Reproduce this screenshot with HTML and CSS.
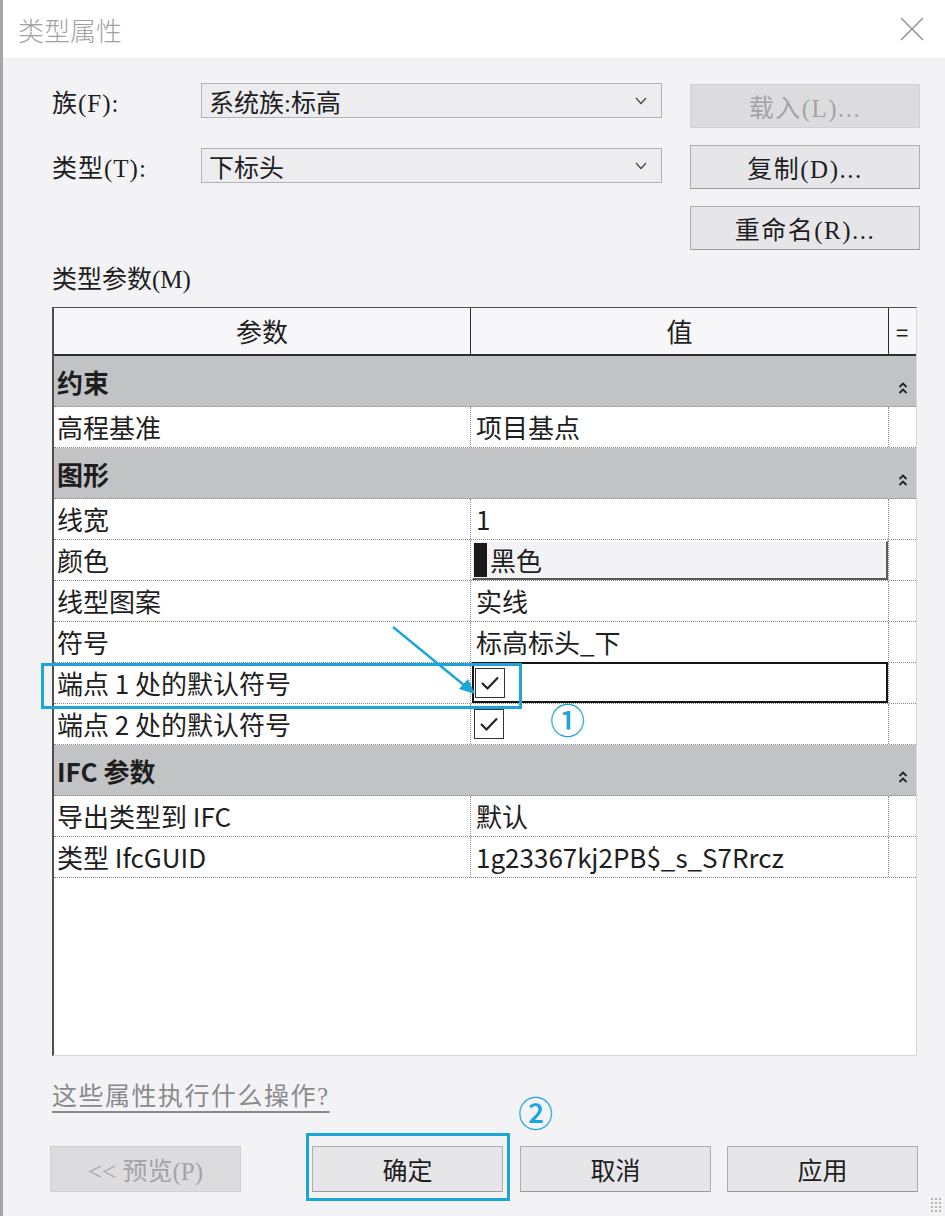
FILE: index.html
```html
<!DOCTYPE html>
<html lang="zh-CN">
<head>
  <meta charset="UTF-8">
  <title>类型属性</title>
  <link rel="stylesheet" href="styles.css">
</head>
<body>
  <div class="dialog">
    <div class="titlebar">
      <span class="title">类型属性</span>
      <svg class="close" width="24" height="24" viewBox="0 0 24 24"><path d="M1 1 L23 23 M23 1 L1 23" stroke="#8c8c8c" stroke-width="1.4" fill="none"/></svg>
    </div>

    <div class="body">
      <div class="top">
        <div class="fields">
          <div class="field">
            <span class="label">族(F):</span>
            <div class="select"><span>系统族:标高</span><svg width="12" height="8" viewBox="0 0 12 8"><path d="M1 1 L6 6.5 L11 1" stroke="#444" stroke-width="1.2" fill="none"/></svg></div>
          </div>
          <div class="field">
            <span class="label">类型(T):</span>
            <div class="select"><span>下标头</span><svg width="12" height="8" viewBox="0 0 12 8"><path d="M1 1 L6 6.5 L11 1" stroke="#444" stroke-width="1.2" fill="none"/></svg></div>
          </div>
        </div>
        <div class="side">
          <button class="btn" disabled>载入(L)...</button>
          <button class="btn">复制(D)...</button>
          <button class="btn">重命名(R)...</button>
        </div>
      </div>

      <div class="section-label">类型参数(M)</div>

      <div class="grid">
        <div class="row head">
          <div class="cell">参数</div>
          <div class="cell">值</div>
          <div class="cell eq">=</div>
        </div>

        <div class="row group">
          <div class="gname">约束</div>
          <div class="chev"><svg width="10" height="14" viewBox="0 0 10 14"><path d="M1.5 6 L5 2.5 L8.5 6 M1.5 12 L5 8.5 L8.5 12" stroke="#222" stroke-width="1.8" fill="none"/></svg></div>
        </div>
        <div class="row data">
          <div class="cell">高程基准</div>
          <div class="cell val">项目基点</div>
          <div class="cell"></div>
        </div>

        <div class="row group">
          <div class="gname">图形</div>
          <div class="chev"><svg width="10" height="14" viewBox="0 0 10 14"><path d="M1.5 6 L5 2.5 L8.5 6 M1.5 12 L5 8.5 L8.5 12" stroke="#222" stroke-width="1.8" fill="none"/></svg></div>
        </div>
        <div class="row data">
          <div class="cell">线宽</div>
          <div class="cell val">1</div>
          <div class="cell"></div>
        </div>
        <div class="row data">
          <div class="cell">颜色</div>
          <div class="cell val"><div class="color-box"><span class="swatch"></span>黑色</div></div>
          <div class="cell"></div>
        </div>
        <div class="row data">
          <div class="cell">线型图案</div>
          <div class="cell val">实线</div>
          <div class="cell"></div>
        </div>
        <div class="row data">
          <div class="cell">符号</div>
          <div class="cell val">标高标头_下</div>
          <div class="cell"></div>
        </div>
        <div class="row data">
          <div class="cell">端点 1 处的默认符号</div>
          <div class="cell val"><div class="editing"><span class="check"><svg width="26" height="26" viewBox="0 0 26 26"><path d="M5 13 L10.5 18.5 L21 7.5" stroke="#222" stroke-width="2.2" fill="none"/></svg></span></div></div>
          <div class="cell"></div>
        </div>
        <div class="row data">
          <div class="cell">端点 2 处的默认符号</div>
          <div class="cell val"><span class="check"><svg width="26" height="26" viewBox="0 0 26 26"><path d="M5 13 L10.5 18.5 L21 7.5" stroke="#222" stroke-width="2.2" fill="none"/></svg></span></div>
          <div class="cell"></div>
        </div>

        <div class="row group">
          <div class="gname">IFC 参数</div>
          <div class="chev"><svg width="10" height="14" viewBox="0 0 10 14"><path d="M1.5 6 L5 2.5 L8.5 6 M1.5 12 L5 8.5 L8.5 12" stroke="#222" stroke-width="1.8" fill="none"/></svg></div>
        </div>
        <div class="row data">
          <div class="cell">导出类型到 IFC</div>
          <div class="cell val">默认</div>
          <div class="cell"></div>
        </div>
        <div class="row data">
          <div class="cell">类型 IfcGUID</div>
          <div class="cell val">1g23367kj2PB$_s_S7Rrcz</div>
          <div class="cell"></div>
        </div>

        <div class="filler"></div>
      </div>

      <div class="help">这些属性执行什么操作?</div>

      <div class="footer">
        <button class="btn" disabled>&lt;&lt; 预览(P)</button>
        <button class="btn ok">确定</button>
        <button class="btn">取消</button>
        <button class="btn">应用</button>
      </div>
    </div>

    <!-- annotations -->
    <div class="mark mark-row"></div>
    <svg class="arrow" width="100" height="80" viewBox="0 0 100 80">
      <path d="M8 7 L85 70" stroke="#1ba6da" stroke-width="2.4" fill="none"/>
      <path d="M90 74 L74 69 L83 59 Z" fill="#1ba6da"/>
    </svg>
    <span class="num num-1">①</span>
    <span class="num num-2">②</span>
    <div class="mark mark-ok"></div>
    <div class="grip"></div>
  </div>
</body>
</html>
```

FILE: styles.css
```css
body {
    margin: 0;
}

.dialog {
    position: relative;
    width: 942px;
    height: 1216px;
    border-left: 3px solid #a6a6a8;
    background: #f3f3f6;
    overflow: hidden;
    font-family: "Noto Sans CJK SC", sans-serif;
    color: #1e1e1e;
}

.titlebar {
    height: 58px;
    background: #fff;
    border-bottom: 1px solid #ececee;
    display: flex;
    align-items: center;
    justify-content: space-between;
    padding: 0 21px 0 15px;
}

.title {
    font-size: 26px;
    font-weight: 300;
    color: #a2a2a4;
}

.body {
    padding: 24px 25px 0 49px;
}

.top {
    display: flex;
    align-items: flex-start;
}

.fields {
    width: 610px;
}

.field {
    display: flex;
    align-items: center;
    height: 35px;
}

.field + .field {
    margin-top: 30px;
}

.label,
.section-label,
.btn,
.select {
    font-family: "Liberation Serif", "Noto Sans CJK SC", serif;
    font-size: 25px;
}

.label {
    width: 149px;
    letter-spacing: 1px;
}

.select {
    box-sizing: border-box;
    width: 461px;
    height: 35px;
    border: 1px solid #b2b2b4;
    background: #ededf0;
    display: flex;
    align-items: center;
    justify-content: space-between;
    padding: 0 14px 0 7px;
}

.side {
    margin-left: 28px;
    margin-top: 1px;
    width: 230px;
    display: flex;
    flex-direction: column;
    gap: 17px;
}

.btn {
    box-sizing: border-box;
    height: 44px;
    background: #e6e6e9;
    border: 1px solid #aeaeb0;
    border-bottom-color: #9a9a9c;
    color: #1e1e1e;
    padding: 0;
}

.side .btn {
    letter-spacing: 1.5px;
}

.btn:disabled {
    background: #dcdcde;
    border-color: #d0d0d2;
    color: #a4a4a6;
}

.section-label {
    margin-top: 15px;
    line-height: 30px;
}

.grid {
    box-sizing: border-box;
    margin-top: 12px;
    width: 865px;
    height: 749px;
    border-top: 1px solid #505052;
    border-left: 2px solid #505052;
    border-right: 1px solid #d8d8da;
    border-bottom: 1px solid #d8d8da;
    display: flex;
    flex-direction: column;
}

.row {
    display: grid;
    grid-template-columns: 416px 418px 27px;
    box-sizing: border-box;
    font-size: 26px;
}

.head {
    height: 48px;
    background: #f7f7f9;
    border-bottom: 2px solid #2e2e30;
    text-align: center;
    line-height: 46px;
}

.head .cell + .cell {
    border-left: 1px solid #2e2e30;
}

.head .eq {
    font-size: 22px;
}

.group {
    height: 51px;
    background: #c2c3c5;
    display: flex;
    align-items: center;
    justify-content: space-between;
    border-bottom: 1px dotted #8a8a8c;
}

.gname {
    font-weight: 700;
    padding-left: 3px;
}

.chev {
    width: 27px;
    text-align: center;
    align-self: flex-start;
    padding-top: 9px;
}

.data {
    height: 41px;
    background: #fff;
    border-bottom: 1px dotted #8a8a8c;
    line-height: 40px;
}

.data .cell {
    padding-left: 3px;
    white-space: nowrap;
}

.data .cell + .cell {
    border-left: 1px dotted #8a8a8c;
}

.data .val {
    padding-left: 5px;
    display: flex;
    align-items: center;
}

.color-box {
    box-sizing: border-box;
    margin-left: -4px;
    margin-top: 1px;
    width: 416px;
    height: 39px;
    background: #f3f3f6;
    border-top: 1px solid #fafafa;
    border-left: 1px solid #fafafa;
    border-right: 2px solid #5a5a5c;
    border-bottom: 2px solid #5a5a5c;
    display: flex;
    align-items: center;
    line-height: 1;
}

.swatch {
    width: 13px;
    height: 34px;
    background: #1a1a1a;
    margin: 0 3px 0 1px;
}

.editing {
    box-sizing: border-box;
    margin-left: -4px;
    width: 416px;
    height: 41px;
    margin-top: -1px;
    border: 2px solid #151515;
    display: flex;
    align-items: center;
    padding-left: 1px;
}

.check {
    box-sizing: border-box;
    width: 30px;
    height: 30px;
    border: 1.5px solid #333;
    background: #fff;
    display: flex;
    align-items: center;
    justify-content: center;
}

.val > .check {
    margin-left: -2px;
}

.filler {
    flex: 1;
    background: #fff;
}

.help {
    margin-top: 25px;
    line-height: 32px;
    font-family: "Liberation Serif", "Noto Sans CJK SC", serif;
    font-size: 25px;
    letter-spacing: 1.5px;
    color: #8a8a8c;
    text-decoration: underline;
    text-underline-offset: 6px;
}

.footer {
    margin-top: 33px;
    margin-left: -2px;
    display: flex;
}

.footer .btn {
    width: 191px;
    height: 46px;
}

.footer .ok {
    margin-left: 71px;
}

.footer .ok + .btn {
    margin-left: 17px;
}

.footer .btn:last-child {
    margin-left: 16px;
}

.mark {
    position: absolute;
    box-sizing: border-box;
    border: 3px solid #1ba6da;
}

.mark-row {
    left: 38px;
    top: 663px;
    width: 481px;
    height: 46px;
}

.mark-ok {
    left: 303px;
    top: 1133px;
    width: 204px;
    height: 68px;
}

.arrow {
    position: absolute;
    left: 382px;
    top: 620px;
}

.num {
    position: absolute;
    font-size: 35px;
    font-weight: 500;
    line-height: 34px;
    color: #1ba6da;
}

.num-1 {
    left: 547px;
    top: 702px;
}

.num-2 {
    left: 515px;
    top: 1095px;
}

.grip {
    position: absolute;
    right: 3px;
    bottom: 3px;
    width: 12px;
    height: 16px;
    background-image: radial-gradient(circle, #b4b4b6 1.3px, transparent 1.5px);
    background-size: 4px 4px;
}
```
